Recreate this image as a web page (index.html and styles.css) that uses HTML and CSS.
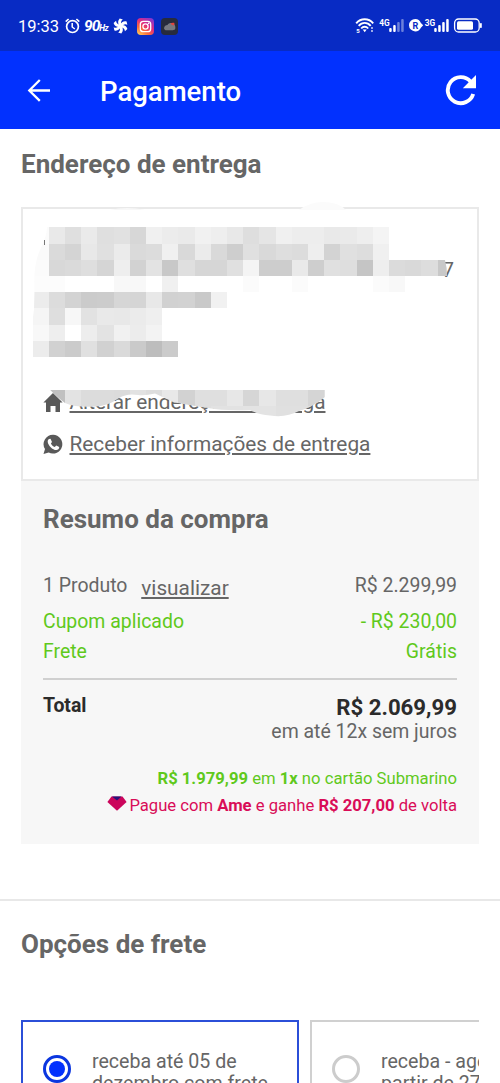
FILE: index.html
```html
<!DOCTYPE html>
<html lang="pt-BR">
<head>
<meta charset="utf-8">
<title>Pagamento</title>
<link rel="stylesheet" href="styles.css">
</head>
<body>
<div class="statusbar">
  <div class="status-left">
    <span class="clock">19:33</span>
    <svg class="alarm" width="15" height="16" viewBox="0 0 15 16" fill="none" stroke="#fff"><circle cx="7.5" cy="8.6" r="5.9" stroke-width="1.7"/><path d="M7.2 5v4l2.6 2" stroke-width="1.5"/><path d="M.7 3.6 3.6 1M14.3 3.6 11.4 1" stroke-width="1.6"/></svg>
    <span class="rate">90<small>Hz</small></span>
    <svg class="fan" width="15" height="16" viewBox="-7.5 -8 15 16" fill="#fff"><circle r="2.200"/><path id="b" d="M-1 0C-3-2.500-2.800-5.500-.8-7.500L2.400-6.500C0-5 .4-3 1 0Z"/><use href="#b" transform="rotate(60)"/><use href="#b" transform="rotate(120)"/><use href="#b" transform="rotate(180)"/><use href="#b" transform="rotate(240)"/><use href="#b" transform="rotate(300)"/></svg>
    <svg class="insta" width="17" height="17" viewBox="0 0 17 17"><defs><linearGradient id="ig" x1="0.1" y1="1" x2="0.8" y2="0"><stop offset="0" stop-color="#ffd05a"/><stop offset=".3" stop-color="#fa6b38"/><stop offset=".6" stop-color="#e02b80"/><stop offset="1" stop-color="#8437cf"/></linearGradient></defs><rect width="17" height="17" rx="4" fill="url(#ig)"/><g fill="none" stroke="#fff" stroke-width="1.3"><rect x="3.300" y="3.300" width="10.400" height="10.400" rx="3"/><circle cx="8.500" cy="8.500" r="2.600"/></g><circle cx="11.600" cy="5.400" r=".8" fill="#fff"/></svg>
    <svg class="game" width="17" height="17" viewBox="0 0 17 17"><rect width="17" height="17" rx="4" fill="#272b3c"/><path d="M3 10.500C3 8 5 7 6.500 7c1-2 4-2.500 5.500-1.500 2 .5 3 4 2 6-1 1-8 1-10 .5Z" fill="#777980"/><path d="M9.500 5.600c1-1 3-1 4-.5l-.5 2.500-2-.5Z" fill="#e4443c"/></svg>
  </div>
  <svg class="status-right" width="128" height="18" viewBox="0 0 128 18" fill="none" stroke="#fff">
    <g transform="translate(1.200 0)">
    <path d="M1 6.300C5.500.8 13.500.8 18 6.300M3.500 8.900c3.500-4 8.500-4 12 0M6 11.500c2-2.300 5-2.300 7 0" stroke-width="1.900"/>
    <path d="M7.500 12.600h4l-2 2.600Z" fill="#fff" stroke="none"/>
    <path d="M16.800 10v5" stroke-width="1.200" stroke-dasharray="2 1"/>
    <g fill="#fff" stroke="none" class="tiny"><text x="1" y="16" font-size="6">5</text><text x="24" y="9" font-size="8.300">4G</text><text x="69.600" y="9" font-size="8.300">3G</text></g>
    <g stroke="none" fill="#fff"><rect x="34" y="11" width="2.500" height="4" rx="1"/><rect x="38" y="8" width="2.500" height="7" rx="1"/><g opacity=".4"><rect x="42" y="5" width="2.500" height="10" rx="1"/><rect x="46" y="2" width="2.500" height="13" rx="1"/></g>
    <path d="M60 2c3 0 4.500 1.600 5.700 4l2.300 2.300-2.300 2.400c-1.200 2.300-2.800 3.700-5.700 3.700a6.200 6.200 0 0 1 0-12.400Z"/>
    <rect x="79" y="11" width="2.500" height="4" rx="1"/><rect x="83" y="8" width="2.500" height="7" rx="1"/><rect x="87" y="5" width="2.500" height="10" rx="1"/><rect x="91" y="2" width="2.500" height="13" rx="1"/></g>
    <text class="tiny" x="57.300" y="11.500" font-size="9" fill="#082bc4" stroke="none">R</text>
    </g>
    <g stroke="none" fill="#fff"><rect x="103" y="4.300" width="16" height="8.400" rx="1.500"/><rect x="126" y="6" width="1.800" height="5" rx=".8"/></g>
    <rect x="100.600" y="2" width="24.600" height="13" rx="4" stroke-width="1.300"/>
  </svg>
</div>
<header class="appbar">
  <svg class="back" width="24" height="24" viewBox="0 0 24 24" fill="none" stroke="#fff" stroke-width="2.300"><path d="M12.800 2 2.300 12.500l10.500 10.400M2.300 12.500H23"/></svg>
  <h1>Pagamento</h1>
  <svg class="reload" width="32" height="32" viewBox="0 0 32 32"><path d="M28.200 20A13 13 0 1 1 25.500 7.500" fill="none" stroke="#fff" stroke-width="3.900"/><path d="M31 1v13.200H17.800Z" fill="#fff"/></svg>
</header>
<main>
  <h2 class="address-title">Endereço de entrega</h2>
  <section class="address">
    <p class="address-end">7</p>
    <div class="address-link"><svg class="icon" width="20" height="20" viewBox="0 0 20 20" fill="#595959"><path d="M10 .9 19.600 10.400H17v9.500h-4.500v-6h-5v6H3v-9.500H.4Z"/></svg><a>Alterar endereço de entrega</a></div>
    <div class="address-link whats"><svg class="icon" width="20" height="20" viewBox="0 0 20 20"><path d="M10.200.8a9.400 9.400 0 1 1-4.500 17.800L.5 20 2 15.100A9.400 9.400 0 0 1 10.200.8Z" fill="#595959"/><path d="M6 5 7.500 4.800 9 7.900 7.900 9.400c1 2 2.100 2.900 3.900 3.700l1.400-1.500 3 1.500c.2 2-1.400 3-2.800 3C9.500 15.900 5 11.400 4.700 7.700 4.700 6.500 5.200 5.500 6 5Z" fill="#fff"/></svg><a>Receber informações de entrega</a></div>
    <svg class="mosaic" width="500" height="230" viewBox="0 197 500 230">
      <defs>
        <clipPath id="upper"><path d="M48 227H389.500V260H445Q447 267 447 276H410V292.500H228V309H179V358H32Q31 330 34 309L34.500 290Q33 265 40 250Q47 236 47 227Z"/></clipPath>
        <clipPath id="lower"><path d="M50 389.700H325V397Q313 407 299 411Q286 418 270 415.500Q257 414 250 410Q224 411 208 408Q188 405 173 402Q165 398 155 393.500Q145 396 138 395Q127 393 119 398Q108 406 96 406.500Q77 408 65 403Q58 398 50 389.700Z"/></clipPath>
      </defs>
      <path d="M299 210Q310 202 323 202Q338 202 346 210Z" fill="#fbfbfb"/>
      <path d="M110 210Q127 206 145 210Z" fill="#f8f8f8"/>
      <g clip-path="url(#upper)" id="upper-cells"></g>
      <g clip-path="url(#lower)" id="lower-cells"></g>
      <path d="M44.500 240v5" stroke="#777" stroke-width="1"/>
    </svg>
  </section>
  <section class="summary">
    <h2>Resumo da compra</h2>
    <div class="row product"><span>1 Produto <a>visualizar</a></span><span class="price">R$ 2.299,99</span></div>
    <div class="row coupon"><span>Cupom aplicado</span><span>- R$ 230,00</span></div>
    <div class="row shipping"><span>Frete</span><span>Grátis</span></div>
    <div class="row total"><strong>Total</strong><strong class="amount">R$ 2.069,99</strong></div>
    <p class="installments">em até 12x sem juros</p>
    <p class="card-offer"><span><b>R$ 1.979,99</b> em <b>1x</b> no cartão Submarino</span></p>
    <p class="ame"><svg width="20" height="15" viewBox="0 0 20 15"><path d="M4.500.5h11L19.600 6 10 14.800.4 6Z" fill="#cb055b"/><path d="M5 .5h9.500L10 4.500Z" fill="#24137a"/></svg><span>Pague com <b>Ame</b> e ganhe <b>R$ 207,00</b> de volta</span></p>
  </section>
</main>
<section class="freight">
  <h2>Opções de frete</h2>
  <div class="options">
    <div class="option selected"><span class="radio"></span><p>receba até 05 de<br>dezembro com frete</p></div>
    <div class="option"><span class="radio"></span><p>receba - agendada a<br>partir de 27 de</p></div>
  </div>
</section>
<script src="mosaic.js"></script>
</body>
</html>
```
FILE: styles.css
```css
* { box-sizing: border-box; }
html, body { height: 100%; }
body { margin: 0; overflow: hidden; background: #fff; font-family: Roboto, "Liberation Sans", sans-serif; color: #666; }
h1, h2, p { margin: 0; }
svg { display: block; flex: none; }

.statusbar { height: 51px; padding: 0 18px; background: #082bc4; display: flex; justify-content: space-between; color: #fff; }
.status-left { display: flex; align-items: center; padding-top: 1px; }
.clock { width: 42px; font-size: 16.500px; }
.alarm { margin-left: 5px; }
.rate { width: 25px; margin-left: 4px; font-size: 15.500px; font-style: italic; font-weight: 700; letter-spacing: -1px; white-space: nowrap; }
.rate small { font-size: 8.500px; letter-spacing: -.6px; }
.fan { margin-left: 4px; }
.insta { margin-left: 9px; }
.game { margin-left: 7px; }
.status-right { margin-top: 17px; }
.tiny { font-weight: 700; }

.appbar { height: 78px; background: #0231fe; color: #fff; display: flex; align-items: center; padding: 0 23px 0 27px; }
.appbar h1 { margin-left: 49px; flex: 1; font-size: 27.500px; font-weight: 500; line-height: 32px; padding-top: 3px; }

h2 { font-size: 26px; line-height: 32px; font-weight: 700; }
main { padding: 0 21px; height: 772px; border-bottom: 2px solid #e8e8e8; }
.address-title { padding-top: 19px; height: 78px; }
.address { position: relative; height: 274px; border: 2px solid #e9e9e9; padding: 0 20px; }
.address-end { height: 179px; padding-top: 48px; text-align: right; padding-right: 3px; font-size: 21px; line-height: 26px; }
.address-link { display: flex; align-items: center; height: 28px; font-size: 20.820px; gap: 6.500px; }
.address-link a, .product a { text-decoration: underline; text-decoration-thickness: 1.500px; text-underline-offset: 2px; }
.whats { margin-top: 14px; }
.mosaic { position: absolute; left: -23px; top: -12px; }

.summary { height: 363px; background: #f7f7f7; padding: 22px 22px 0; }
.row { display: flex; justify-content: space-between; font-size: 19.450px; line-height: 30px; }
.product { margin-top: 35px; height: 31px; }
.product a { position: relative; top: 3px; margin-left: 9px; font-size: 20.800px; }
.price { padding-top: 1px; }
.coupon { margin-top: 6px; }
.coupon, .shipping { color: #5fc91c; }
.shipping { border-bottom: 2px solid #d0d0d0; height: 43px; }
.total { margin-top: 11px; height: 33px; color: #2b2b2b; }
.amount { font-size: 22.200px; padding-top: 1px; }
.installments { text-align: right; font-size: 19.450px; line-height: 24px; margin-top: -4px; }
.card-offer { display: flex; justify-content: flex-end; margin-top: 22px; font-size: 16.650px; line-height: 26px; color: #5fc91c; }
.ame { display: flex; justify-content: flex-end; gap: 2px; font-size: 16.650px; line-height: 27px; color: #d90c57; }
.ame svg { margin-top: 4px; }

.freight { padding: 27px 21px 0; }
.options { display: flex; gap: 11px; margin-top: 60px; overflow: hidden; height: 63px; }
.option { flex: 0 0 278px; height: 130px; border: 2px solid #d0d0d0; padding: 28px 20px; display: flex; gap: 21px; font-size: 19.600px; line-height: 22px; white-space: nowrap; }
.option p { padding-top: 1px; }
.selected { border-color: #2b4fd8; }
.radio { flex: none; width: 28px; height: 28px; border-radius: 50%; border: 3px solid #ccc; margin-top: 5px; }
.selected .radio { border-color: #0b36df; padding: 3px; background: #0231fe content-box; }
```
FILE: mosaic.js
```javascript
// Grey levels of the censoring mosaic, one two-digit hex level per cell; "--" leaves a cell clear.
const upper = [
  "fb e9 df ea df e1 d7 f0 ec ea f1 ee e8 de e5 f0 ed ed e9 ea ee f4",
  "fa da d4 e8 e0 eb da dc f0 d9 eb d9 ce e0 d9 de dc ee d3 e0 dd f0",
  "fb d8 da de d5 ee d2 e3 c8 df d6 d6 e0 f4 cd cd e9 ce e0 de c5 ee db d9 dd c8",
  "fc fc -- -- -- f8 f8 -- f0",
  "ec dc d3 cb cc d6 d5 e8 d1 d2 c9 f1",
  "f5 de f7 e2 e9 e8 eb ef",
  "f8 ee ff ed e3 f1 ec f3",
  "ec d1 cb e0 d1 da ca bd cb"
];
const lower = ["-- c0 e3 dc dc db e2 dd e8 d2 df df e7 d6 e7 df df d5 e0", "-- e0 e6 e0 e0 e0 e6 e6 e8 df df e2 e2 e3 e3 e0 e0 e0 e0"];
const cell = 16.2;

function cellRect(group, x, y, level) {
  const rect = document.createElementNS("http://www.w3.org/2000/svg", "rect");
  rect.setAttribute("x", x);
  rect.setAttribute("y", y);
  rect.setAttribute("width", cell);
  rect.setAttribute("height", cell);
  rect.setAttribute("fill", "#" + level.repeat(3));
  rect.setAttribute("shape-rendering", "crispEdges");
  group.appendChild(rect);
}

function fill(id, rows, top) {
  const group = document.getElementById(id);
  rows.forEach((row, j) => row.split(" ").forEach((level, i) => {
    if (level !== "--") cellRect(group, 32.6 + i * cell, top + j * cell, level);
  }));
}

fill("upper-cells", upper, 227.4);
fill("lower-cells", lower, 389.7);

// Faint cells just below the long third line.
const mosaic = document.querySelector(".mosaic");
[[13, "fb"], [16, "fb"], [21, "fb"], [22, "f8"]].forEach(([i, level]) => cellRect(mosaic, 32.6 + i * cell, 276.1, level));
```
